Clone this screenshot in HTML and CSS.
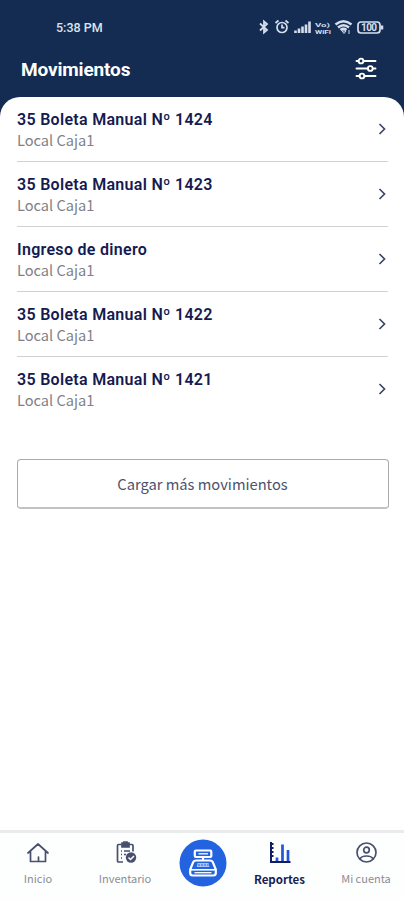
FILE: index.html
```html
<!DOCTYPE html>
<html lang="es">
<head>
<meta charset="utf-8">
<title>Movimientos</title>
<link rel="stylesheet" href="styles.css">
</head>
<body>
<div class="app">
  <header class="header">
    <div class="status">
      <span class="time">5:38 PM</span>
      <svg class="status-icons" width="126" height="18" viewBox="0 0 126 18" fill="none" stroke="#d5deee" stroke-width="1.7">
        <path d="M2 5.500l7 6.500L6 14.500V3.500l3 2.500L2 12.500" stroke-width="1.800"/>
        <circle cx="24" cy="9.500" r="5"/><path d="M24 6.500v3.200h2.500M17.500 5l3-2.500M30.500 5l-3-2.500"/>
        <path d="M37.500 15v-2.500M41 15v-4.500M44.500 15V8.500M48 15V6.500M51.500 15V3.500" stroke-width="2.600"/>
        <path d="M77.500 6.500q8-6.500 16 0M80 9.500q5.500-4.500 11 0M82.500 12q3-2.300 6 0" stroke-width="2.500"/><path d="M84 13h4l-2 2.500zM91 12v4" stroke-width="1"/>
        <rect x="100" y="4" width="22" height="11" rx="3"/><path d="M124 7.500v4" stroke-width="2.500"/>
        <text class="tiny" x="57" y="8.500" textLength="15" lengthAdjust="spacingAndGlyphs">Vo)</text><text class="tiny" x="57" y="15.500" textLength="16" lengthAdjust="spacingAndGlyphs">WiFi</text>
        <text class="charge" x="103" y="13" textLength="16">100</text>
      </svg>
    </div>
    <div class="titlebar">
      <h1>Movimientos</h1>
      <svg width="22" height="24" viewBox="0 0 22 24" fill="none" stroke="#fff" stroke-width="1.900" stroke-linecap="round">
        <path d="M1.500 4h2M8.500 4h12M1.500 11.500h11M18 11.500h2.500M1.500 19h3M9.500 19h11"/>
        <circle cx="6" cy="4" r="2.400"/><circle cx="15.300" cy="11.500" r="2.400"/><circle cx="7" cy="19" r="2.400"/>
      </svg>
    </div>
  </header>
  <main class="sheet">
    <ul class="list">
      <li><div><h2>35 Boleta Manual Nº 1424</h2><p>Local Caja1</p></div><svg class="chev" viewBox="0 0 8 12"><path d="M1.500 1l5 5-5 5"/></svg></li>
      <li><div><h2>35 Boleta Manual Nº 1423</h2><p>Local Caja1</p></div><svg class="chev" viewBox="0 0 8 12"><path d="M1.500 1l5 5-5 5"/></svg></li>
      <li><div><h2>Ingreso de dinero</h2><p>Local Caja1</p></div><svg class="chev" viewBox="0 0 8 12"><path d="M1.500 1l5 5-5 5"/></svg></li>
      <li><div><h2>35 Boleta Manual Nº 1422</h2><p>Local Caja1</p></div><svg class="chev" viewBox="0 0 8 12"><path d="M1.500 1l5 5-5 5"/></svg></li>
      <li><div><h2>35 Boleta Manual Nº 1421</h2><p>Local Caja1</p></div><svg class="chev" viewBox="0 0 8 12"><path d="M1.500 1l5 5-5 5"/></svg></li>
    </ul>
    <button class="more">Cargar más movimientos</button>
  </main>
  <nav class="nav">
    <a class="item">
      <svg width="24" height="24" viewBox="0 0 24 24" fill="none" stroke="#47506e" stroke-width="1.700" stroke-linejoin="round" stroke-linecap="round"><path d="M2 12L12 3l10 9M4.500 10.500v10h15v-10M12.500 20v-4"/></svg>
      <span>Inicio</span>
    </a>
    <a class="item">
      <svg width="24" height="24" viewBox="0 0 24 24" fill="none" stroke="#47506e" stroke-width="1.700"><path d="M10 21H5.500q-1 0-1-1V4.500q0-1 1-1h3M16 3.500h3q1 0 1 1v6"/><path d="M9 2h7v4H9z" fill="#47506e"/><path d="M11 2.500V1h3v1.500M8 10h1M11 10h6M8 13.500h1M11 13.500h2M8 17h1"/><circle cx="18" cy="16.500" r="5.200" fill="#47506e" stroke="none"/><path d="M15.500 16.500l2 2 3.500-3.500" stroke="#fff" stroke-width="1.500"/></svg>
      <span>Inventario</span>
    </a>
    <a class="sale">
      <svg width="48" height="48" viewBox="0 0 48 48" fill="none" stroke="#fff" stroke-width="2.200" stroke-linejoin="round"><circle cx="24" cy="24" r="23.500" fill="#2463df" stroke="none"/><rect x="15.800" y="11.500" width="16.500" height="6.500" rx="1"/><path d="M19.500 14.800h9.500" stroke-width="1.300"/><path d="M24 18v3"/><path d="M17 21.500h14q2 0 2.900 1.800l2.900 7.200v3.500q0 2.500-2.500 2.500H13.700q-2.500 0-2.500-2.500v-3.500l2.900-7.200q.9-1.800 2.900-1.800z"/><path d="M12 30.800h24" stroke-width="1.600"/><path d="M15.500 33.700h17" stroke-width="1.300"/><path d="M18.500 24h11l.8 4h-12.600z" fill="#a9c2f5" stroke="none"/><path d="M19 26h10.500" stroke="#2463df" stroke-width="1.200" stroke-dasharray="2 1"/></svg>
    </a>
    <a class="item active">
      <svg width="24" height="24" viewBox="0 0 24 24" fill="none" stroke="#111c62" stroke-width="2"><path d="M3 1v20h19.500M3 3h2.500M3 7h2.500M3 11h2.500M3 15h2.500"/><path d="M9 20v-3.500M14.500 20V3.500M20 20V9" stroke="#2355d8" stroke-width="2.700"/></svg>
      <span>Reportes</span>
    </a>
    <a class="item">
      <svg width="24" height="24" viewBox="0 0 24 24" fill="none" stroke="#47506e" stroke-width="1.700"><circle cx="12.500" cy="11.500" r="9.500"/><circle cx="12.500" cy="9" r="2.800"/><path d="M6 18c1-2.500 3-3 6.500-3s5.500.5 6.500 3"/></svg>
      <span>Mi cuenta</span>
    </a>
  </nav>
</div>
</body>
</html>
```
FILE: styles.css
```css
* { box-sizing: border-box; }
body { margin: 0; background: #142c52; }
h1, h2, p, ul { margin: 0; padding: 0; }
.app {
  width: 404px;
  height: 900px;
  display: flex;
  flex-direction: column;
  overflow: hidden;
}
.header { height: 97px; color: #fff; font-family: Roboto, sans-serif; }
.status {
  height: 44px;
  padding: 10px 20px 0 56px;
  display: flex;
  align-items: center;
  justify-content: space-between;
}
.time { font-size: 12.5px; font-weight: 500; color: #dce4f0; }
.status-icons text { stroke: none; fill: #d5deee; font-family: Roboto, sans-serif; font-weight: 700; }
.status-icons .tiny { font-size: 6px; }
.status-icons .charge { font-size: 10px; }
.titlebar {
  height: 50px;
  padding: 0 27px 0 21px;
  display: flex;
  align-items: center;
  justify-content: space-between;
}
.titlebar h1 { font-size: 19px; font-weight: 700; letter-spacing: -0.15px; }
.sheet {
  flex: 1;
  background: #fff;
  border-radius: 20px 20px 0 0;
  padding: 0 16px 0 17px;
}
.list { list-style: none; }
.list li {
  height: 65px;
  padding-bottom: 1px;
  display: flex;
  justify-content: space-between;
  align-items: center;
  border-bottom: 1.500px solid #d0d2d6;
}
.list li:last-child { border: 0; height: 64px; }
.list h2 {
  padding-top: 1px;
  font: 600 16px/21px Roboto, sans-serif;
  letter-spacing: 0.3px;
  color: #151b50;
}
.list p {
  font: 400 14.6px/20px "Noto Sans CJK SC", sans-serif;
  color: #7f8187;
}
.chev {
  width: 8px;
  height: 12px;
  margin-right: 2px;
  fill: none;
  stroke: #3c4868;
  stroke-width: 1.700;
}
.more {
  display: block;
  width: 372px;
  height: 50px;
  margin: 38px 0 0 -0.5px;
  padding: 1px 0 0;
  background: #fff;
  border: 1px solid #a9abae;
  border-bottom: 2px solid #c0c2c4;
  border-radius: 4px;
  font: 400 14.7px/20px "Noto Sans CJK SC", sans-serif;
  color: #4b526d;
}
.nav {
  height: 70px;
  background: #fdfefe;
  border-top: 3px solid #e9ebed;
  display: grid;
  grid-template-columns: 76px 98px 57px 97px 76px;
  align-items: start;
}
.item {
  padding-top: 8px;
  display: flex;
  flex-direction: column;
  align-items: center;
}
.item span {
  margin-top: 4px;
  font: 400 11px/18px "Noto Sans CJK SC", sans-serif;
  white-space: nowrap;
  color: #8b8d94;
}
.item.active span { margin-top: 5px; font-size: 11.5px; font-weight: 700; color: #161f54; }
.sale { display: flex; justify-content: center; padding-top: 6px; }
```
